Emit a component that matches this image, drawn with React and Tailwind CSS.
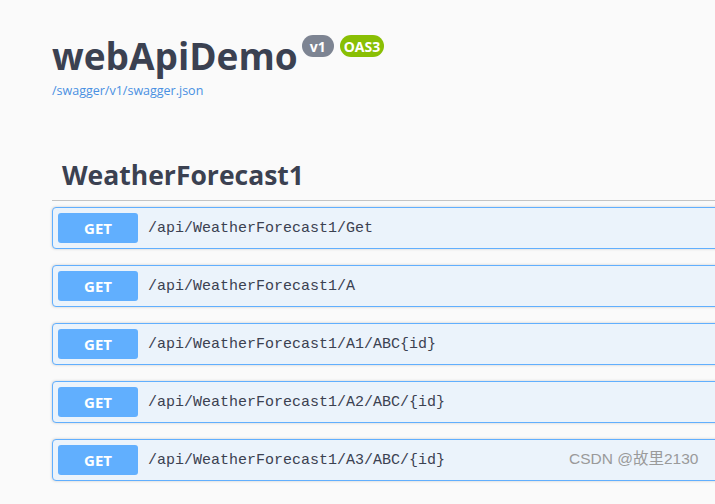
import React from 'react';

const paths = [
  '/api/WeatherForecast1/Get',
  '/api/WeatherForecast1/A',
  '/api/WeatherForecast1/A1/ABC{id}',
  '/api/WeatherForecast1/A2/ABC/{id}',
  '/api/WeatherForecast1/A3/ABC/{id}',
];

const OpRow = ({ path }) => (
  <div className="flex items-center h-[42px] w-[700px] border border-[#61affe] rounded-[4px] bg-[#ebf3fb] px-[5px] shadow-[0_0_3px_rgba(0,0,0,0.19)]">
    <span className="w-[80px] h-[30px] rounded-[3px] bg-[#61affe] text-white text-[15px] font-bold flex items-center justify-center">
      GET
    </span>
    <span className="ml-[10px] pt-[3px] text-[15px] text-[#3b4151] font-['Liberation_Mono',monospace]">{path}</span>
  </div>
);

const App = () => {
  return (
    <div className="relative w-[715px] h-[504px] overflow-hidden bg-[#fafafa] text-[#3b4151] font-['Open_Sans',sans-serif]">
      <div className="pl-[52px] pt-[28px]">
        <div className="flex items-start">
          <h1 className="text-[37px] font-bold leading-[56px]">webApiDemo</h1>
          <div className="flex gap-[6px] ml-[4px] mt-[7px]">
            <span className="h-[22px] px-[8px] rounded-full bg-[#7d8492] text-white text-[14px] font-bold flex items-center">v1</span>
            <span className="h-[22px] px-[4px] rounded-full bg-[#89bf04] text-white text-[14px] font-bold flex items-center">OAS3</span>
          </div>
        </div>
        <a className="block text-[12.5px] text-[#4990e2] leading-[16px] -mt-[1px]">/swagger/v1/swagger.json</a>
      </div>

      <div className="pl-[52px] mt-[57px]">
        <div className="border-b border-[#c4c4c4] pl-[10px] pb-[6px]">
          <h2 className="text-[26.5px] font-bold leading-[38px]">WeatherForecast1</h2>
        </div>
        <div className="flex flex-col gap-[16px] mt-[6px]">
          {paths.map((p) => (
            <OpRow key={p} path={p} />
          ))}
        </div>
      </div>

      <div className="absolute left-[569px] top-[447px] text-[15.5px] text-[#9a9a9a] font-['Liberation_Sans','Noto_Sans_CJK_SC',sans-serif]">
        CSDN @故里2130
      </div>
    </div>
  );
};

export default App;
